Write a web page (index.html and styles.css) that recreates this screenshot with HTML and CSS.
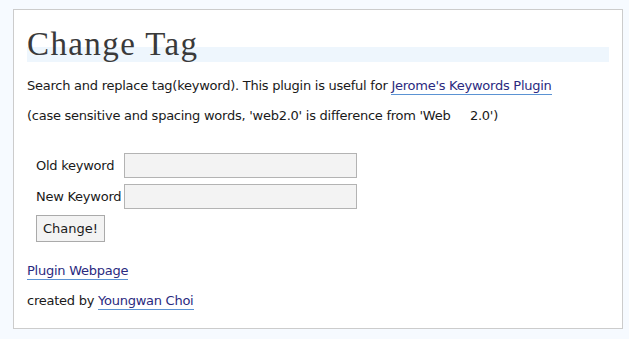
FILE: index.html
```html
<!DOCTYPE html>
<html>
<head>
	<meta charset="utf-8">
	<title>Change Tag</title>
	<link rel="stylesheet" href="styles.css">
</head>
<body>
	<div class="wrap">
		<h2 class="title">Change Tag</h2>
		<p>Search and replace tag(keyword). This plugin is useful for <a href="#">Jerome's Keywords Plugin</a></p>
		<p>(case sensitive and spacing words, 'web2.0' is difference from 'Web&nbsp;&nbsp;&nbsp;&nbsp; 2.0')</p>

		<form class="change-form">
			<label for="old">Old keyword</label>
			<input type="text" id="old" class="field">
			<label for="new">New Keyword</label>
			<input type="text" id="new" class="field">
			<div class="submit-row"><button type="button" class="btn">Change!</button></div>
		</form>

		<p class="plugin-link"><a href="#">Plugin Webpage</a></p>
		<p>created by <a href="#">Youngwan Choi</a></p>
	</div>
</body>
</html>
```

FILE: styles.css
```css
*{
	box-sizing: border-box;
}
html{
	font-size: 13px;
}
body{
	margin: 0;
	padding: 9px 0 0 13px;
	background: #f6faff;
	font-family: "DejaVu Sans", Verdana, sans-serif;
	letter-spacing: -0.25px;
	color: #1a1a1a;
}
.wrap{
	width: 610px;
	height: 320px;
	background: #ffffff;
	border: 1px solid #cccccc;
	padding: 13px;
}
.title{
	margin: 3px 0 15px;
	font-family: "Liberation Serif", "Times New Roman", serif;
	font-weight: normal;
	font-size: 33px;
	letter-spacing: 1.4px;
	line-height: 36px;
	color: #3a3a3a;
	background: linear-gradient(transparent 58%, #eef6fd 58%);
}
p{
	margin: 0 0 12px;
	line-height: 18px;
}
a{
	color: #2a2a80;
	text-decoration: none;
	border-bottom: 1px solid #5b93d3;
	padding-bottom: 1px;
}
.change-form{
	display: grid;
	grid-template-columns: auto 233px;
	justify-content: start;
	align-items: center;
	gap: 6px 3px;
	margin: 28px 0 16px 9px;
}
.field{
	height: 25px;
	margin: 0;
	border: 1px solid #b3b3b3;
	background: #f3f3f3;
	font: inherit;
}
.submit-row{
	grid-column: 1 / 3;
}
.btn{
	height: 27px;
	padding: 0 6px;
	border: 1px solid #aaaaaa;
	background: #f3f3f3;
	font: inherit;
	color: #1a1a1a;
}
.plugin-link{
	margin-top: 20px;
}
```
